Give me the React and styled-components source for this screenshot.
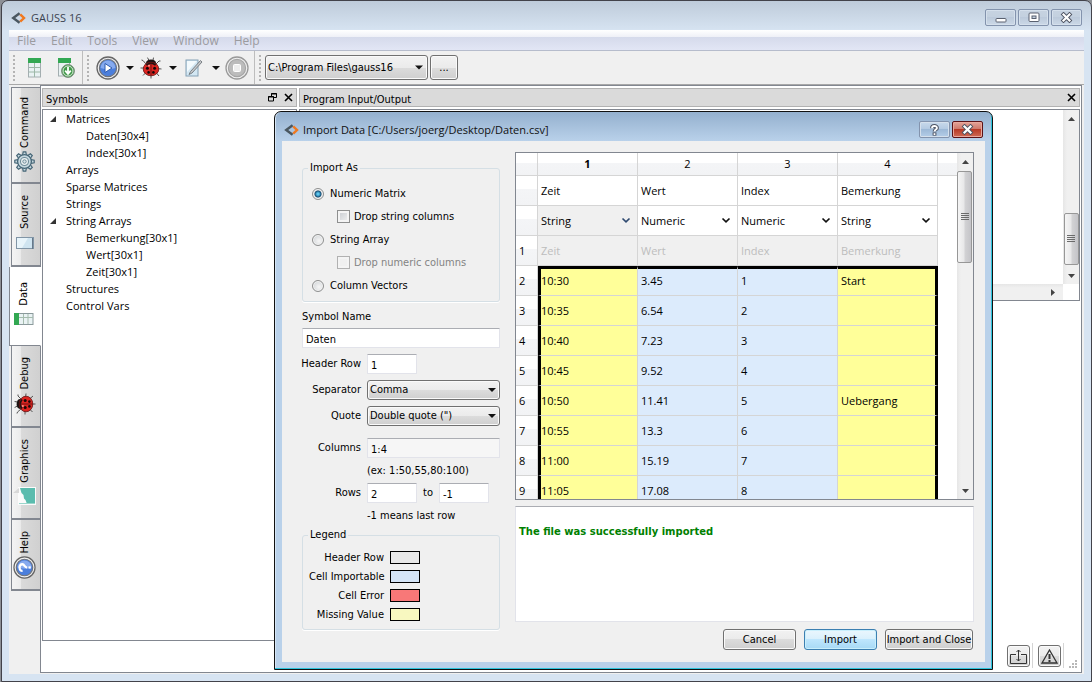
import React from "react";
import styled, { createGlobalStyle, css } from "styled-components";

const ui = '"DejaVu Sans Condensed", "DejaVu Sans", sans-serif';
const segoe = '"Open Sans", "Noto Sans", sans-serif';
const line = "#828790";

const Global = createGlobalStyle`
  *, *::before, *::after { box-sizing: border-box; }
  html, body { margin: 0; background: #8d9096; }
  body { font: 11px/14px ${ui}; color: #000; }
  button, input, select { font: inherit; color: inherit; margin: 0; }
  svg { display: block; flex: none; }
`;

/* ---------- main window ---------- */
const Desktop = styled.div`
  position: relative;
  min-height: 100vh;
  display: flex;
  padding-left: 1px;
`;
const Window = styled.div`
  flex: 1;
  display: flex;
  flex-direction: column;
  border: 1px solid #42424a;
  border-radius: 7px 7px 0 0;
  padding: 0 7px 7px;
  background: linear-gradient(#becbda, #d7e4f2 30px, #d7e4f2);
`;
const TitleBar = styled.header`
  height: 29px;
  display: flex;
  align-items: center;
  gap: 5px;
  padding: 4px 0 0 2px;
  font-family: ${segoe};
  color: #3b4350;
`;
const TitleText = styled.h1`
  margin: 0;
  flex: 1;
  font: inherit;
`;
const CaptionButtons = styled.div`
  display: flex;
  gap: 2px;
  padding-right: 2px;
`;
const CaptionButton = styled.button`
  width: 31px;
  height: 17px;
  padding: 0;
  display: grid;
  place-items: center;
  border: 1px solid ${(p) => (p.$danger ? "#5b1216" : "#8393ad")};
  border-radius: 2px;
  box-shadow: inset 0 0 0 1px ${(p) => (p.$danger ? "#e9a89d" : "#d5e0ec")};
  background: ${(p) =>
    p.$danger
      ? "linear-gradient(#e3a499, #d07a6c 45%, #b83a26 50%, #cf6b55)"
      : p.$active
      ? "linear-gradient(#c8d9eb, #b4cae2 45%, #9db9d7 50%, #b4cde8)"
      : "linear-gradient(#c7d3e1, #c3d0df 50%, #bccadb 50%, #cbd8e7)"};
`;
const MenuBar = styled.nav`
  height: 21px;
  display: flex;
  gap: 15px;
  padding: 2px 8px 0;
  border-bottom: 1px solid #b6bccc;
  background: linear-gradient(#fff, #eef0f7 7px, #d5daeb 7px, #e2e6f5);
  font-family: ${segoe};
`;
const MenuItem = styled.button`
  padding: 0;
  border: 0;
  background: none;
  color: #9b9b9f;
  font-size: 12px;
  line-height: 16px;
`;
const ToolBar = styled.div`
  height: 34px;
  display: flex;
  align-items: center;
  border-bottom: 1px solid #a8a8a8;
  background: #f0f0f0;
`;
const ToolGroup = styled.div`
  height: 100%;
  display: flex;
  align-items: center;
  gap: ${(p) => p.$gap}px;
  padding: 0 ${(p) => p.$end}px 0 4px;
  border-right: ${(p) => (p.$last ? 0 : 1)}px solid #bdbdbd;
`;
const Grip = styled.span`
  width: 2px;
  height: 26px;
  margin-right: ${(p) => p.$after}px;
  background: repeating-linear-gradient(#b4b4b4 0 2px, transparent 2px 4px);
`;
const ToolButton = styled.button`
  width: ${(p) => p.$w || 24}px;
  height: 26px;
  padding: 0;
  display: grid;
  place-items: center;
  border: 0;
  background: none;
`;

const SelectBox = styled.span`
  position: relative;
  display: block;
  width: ${(p) => (p.$w ? p.$w + "px" : "100%")};
  height: ${(p) => p.$h || 20}px;
  svg {
    position: absolute;
    right: ${(p) => p.$inset || 4}px;
    top: 0;
    height: 100%;
    pointer-events: none;
  }
`;
const NativeSelect = styled.select`
  appearance: none;
  width: 100%;
  height: 100%;
  padding: 0 16px 0 2px;
  border: 1px solid #707070;
  border-radius: 3px;
  box-shadow: inset 0 0 0 1px #fafafa;
  background: linear-gradient(#f2f2f2, #ebebeb 50%, #dcdcdc 50%, #cfcfcf);
`;
const PushButton = styled.button`
  width: ${(p) => p.$w}px;
  height: ${(p) => p.$h || 21}px;
  padding: 0;
  white-space: nowrap;
  border: 1px solid ${(p) => (p.$primary ? "#3c7fb1" : "#707070")};
  border-radius: 3px;
  box-shadow: inset 0 0 0 1px ${(p) => (p.$primary ? "#c9effc" : "#fafafa")};
  background: ${(p) =>
    p.$primary
      ? "linear-gradient(#eaf6fd, #d9f0fc 50%, #bee6fd 50%, #a7d9f5)"
      : "linear-gradient(#f2f2f2, #ebebeb 50%, #dcdcdc 50%, #cfcfcf)"};
`;

/* ---------- body of the main window ---------- */
const Body = styled.div`
  flex: 1;
  display: flex;
  background: #f0f0f0;
`;
const TabStrip = styled.div`
  width: 32px;
  display: flex;
  flex-direction: column;
  align-items: flex-end;
  padding-top: 2px;
  margin-right: -1px;
  z-index: 1;
`;
const SideTab = styled.button`
  width: ${(p) => (p.$active ? 32 : 30)}px;
  height: ${(p) => p.$h}px;
  display: flex;
  flex-direction: column;
  align-items: center;
  justify-content: center;
  gap: 3px;
  padding: 0 3px 0 0;
  border: 1px solid ${line};
  border-bottom-width: ${(p) => (p.$active ? 1 : 2)}px;
  border-top-width: ${(p) => (p.$first ? 1 : 0)}px;
  ${(p) =>
    p.$active
      ? css`
          border-right-color: #fff;
          background: #fff;
        `
      : css`
          background: linear-gradient(90deg, #f4f4f4, #ececec 30%, #dadada 34%, #d0d0d0);
        `}
`;
const TabText = styled.span`
  writing-mode: vertical-rl;
  transform: rotate(180deg);
  line-height: 14px;
`;
const TabIcon = styled.span`
  height: 22px;
  display: grid;
  place-items: center;
`;
const Pane = styled.main`
  flex: 1;
  min-width: 0;
  display: flex;
  gap: 1px;
  margin-right: 2px;
  margin-bottom: 1px;
  border: 1px solid ${line};
  background: #fff;
`;
const Dock = styled.section`
  display: flex;
  flex-direction: column;
  ${(p) => (p.$w ? `width: ${p.$w}px;` : "flex: 1; min-width: 0; padding-right: 1px;")}
  padding-top: 2px;
  padding-left: 1px;
`;
const DockTitle = styled.h2`
  height: 19px;
  display: flex;
  align-items: center;
  gap: 7px;
  margin: 0 0 2px;
  padding: 0 3px;
  border: 1px solid #b2b2b2;
  background: #dadada;
  font: inherit;
`;
const DockName = styled.span`
  flex: 1;
  padding-top: 4px;
`;
const IconButton = styled.button`
  padding: 0;
  border: 0;
  background: none;
`;
const Tree = styled.ul`
  flex: 1;
  margin: 0 0 31px;
  padding: 0 0 0 7px;
  list-style: none;
  border: 1px solid ${line};
  font: 11px/17px ${segoe};
`;
const TreeItem = styled.li`
  height: 17px;
  display: flex;
  align-items: center;
  padding-left: ${(p) => p.$depth * 20}px;
`;
const Twisty = styled.span`
  width: 16px;
`;
const Output = styled.div`
  height: 192px;
  display: grid;
  grid-template: 1fr 16px / 1fr 16px;
  border: 1px solid ${line};
`;
const ScrollTrack = styled.div`
  display: flex;
  flex-direction: ${(p) => (p.$row ? "row" : "column")};
  align-items: center;
  justify-content: ${(p) => (p.$spread ? "space-between" : "flex-end")};
  padding: ${(p) => (p.$row ? "0 7px" : "5px 0")};
  background: ${(p) => (p.$row ? "linear-gradient(#e6e6e6, #f0f0f0 4px)" : "linear-gradient(90deg, #e6e6e6, #f0f0f0 4px)")};
`;
const Thumb = styled.div`
  width: 15px;
  height: ${(p) => p.$h}px;
  margin: ${(p) => p.$m};
  display: grid;
  place-items: center;
  border: 1px solid #979797;
  border-radius: 2px;
  background: linear-gradient(90deg, #f5f5f5, #e8e8e9 45%, #d2d2d4 55%, #c4c4c8);
`;
const StatusCorner = styled.div`
  margin-top: auto;
  display: flex;
  justify-content: flex-end;
  gap: 2px;
  padding: 0 3px 4px;
`;
const StatusDivider = styled.span`
  width: 1px;
  height: 25px;
  margin-right: 3px;
  background: #d5d5d5;
`;
const StatusButton = styled(PushButton)`
  width: 23px;
  height: 22px;
  margin-top: 2px;
  display: grid;
  place-items: center;
`;
const ResizeCorner = styled.span`
  align-self: flex-end;
`;

/* ---------- import dialog ---------- */
const Dialog = styled.div`
  position: absolute;
  left: 274px;
  top: 111px;
  z-index: 5;
  width: 719px;
  max-width: calc(100vw - 280px);
  padding: 0 7px 7px;
  border: 1px solid #111;
  border-radius: 7px 7px 0 0;
  box-shadow: inset -1px -1px 0 #2cc4dc, inset 1px 0 0 #d6e6f5;
  background: linear-gradient(#94b0ce, #b9d1ea 29px, #b9d1ea);
`;
const DialogTitle = styled(TitleBar)`
  color: #111;
  padding: 6px 0 0 2px;
  gap: 4px;
`;
const DialogBody = styled.form`
  display: flex;
  gap: 15px;
  padding: 11px 11px 12px 20px;
  background: #f0f0f0;
`;
const Options = styled.div`
  width: 198px;
  flex: none;
  padding-top: 9px;
`;
const Group = styled.fieldset`
  margin: 0 0 ${(p) => p.$after || 0}px;
  min-width: 0;
  padding: ${(p) => p.$pad};
  border: 1px solid #d5dfe5;
  border-radius: 3px;
  box-shadow: 0 1px 0 #fff;
  display: flex;
  flex-direction: column;
  legend {
    margin-left: -1px;
    padding: 0 2px;
  }
`;
const Choice = styled.label`
  height: 23px;
  display: flex;
  align-items: center;
  gap: ${(p) => (p.$indent ? 4 : 6)}px;
  padding-left: ${(p) => (p.$indent ? 28 : 3)}px;
  color: ${(p) => (p.$off ? "#838383" : "#000")};
`;
const Radio = styled.input`
  appearance: none;
  width: 12px;
  height: 12px;
  border: 1px solid #8e8f8f;
  border-radius: 50%;
  box-shadow: inset 0 0 0 1px #f4f4f4;
  background: radial-gradient(circle at 60% 60%, #f6f6f6, #c9cdd1);
  &:checked {
    background: radial-gradient(circle, #5cc6ee 0 1px, #16557e 3px, #10314f 3px, #dfe5ea 4px);
  }
`;
const Check = styled.input`
  appearance: none;
  width: 13px;
  height: 13px;
  border: 1px solid ${(p) => (p.disabled ? "#b1b1b1" : "#8e8f8f")};
  box-shadow: inset 0 0 0 2px #f4f4f4;
  background: ${(p) => (p.disabled ? "#f0f0f0" : "linear-gradient(135deg, #c5c9ce, #f3f3f3)")};
`;
const FieldLabel = styled.label`
  display: flex;
  white-space: nowrap;
  justify-content: ${(p) => (p.$right ? "flex-end" : "flex-start")};
`;
const TextBox = styled.input`
  width: ${(p) => (p.$w ? p.$w + "px" : "100%")};
  height: 20px;
  padding: 2px 4px 0 3px;
  border: 1px solid #e2e3ea;
  border-top-color: #abadb3;
  border-radius: 1px;
  background: ${(p) => (p.disabled ? "#f6f6f6" : "#fff")};
`;
const WideField = styled.div`
  grid-column: 1 / 3;
`;
const FormGrid = styled.div`
  display: grid;
  grid-template-columns: 59px 133px;
  column-gap: 6px;
  align-items: center;
  row-gap: 6px;
  margin: ${(p) => p.$m};
`;
const RangeRow = styled.div`
  display: flex;
  align-items: center;
  gap: 6px;
`;
const Hint = styled.div`
  grid-column: 2;
  height: ${(p) => p.$h}px;
  line-height: 14px;
`;
const LegendList = styled.dl`
  display: grid;
  grid-template-columns: 75px 30px;
  gap: 6px 6px;
  align-items: center;
  margin: 0;
  dt {
    text-align: right;
    line-height: 13px;
    white-space: nowrap;
  }
`;
const Swatch = styled.dd`
  height: 13px;
  margin: 0;
  border: 1px solid #000;
  background: ${(p) => p.$color};
`;

const Results = styled.div`
  flex: 1;
  min-width: 0;
  display: flex;
  flex-direction: column;
`;
const GridFrame = styled.div`
  height: 348px;
  display: flex;
  border: 1px solid ${line};
  overflow: hidden;
  background: #fff;
`;
const GridView = styled.div`
  flex: 1;
  min-width: 0;
  overflow: hidden;
  background: linear-gradient(#fff, #fff 10px, #f4f5f7 10px, #f2f3f5 22px, #d5d5d5 22px, #d5d5d5 23px, #fff 23px);
`;
const DataTable = styled.table`
  width: 422px;
  table-layout: fixed;
  border-collapse: separate;
  border-spacing: 0;
  font: 11px/14px ${segoe};
`;
const headFill = "linear-gradient(#fff, #fff 45%, #f4f5f7 45%, #f2f3f5)";
const ColHead = styled.th`
  width: ${(p) => (p.$corner ? 22 : 100)}px;
  height: 23px;
  padding: 0;
  border: solid #d5d5d5;
  border-width: 0 1px 1px 0;
  background: ${headFill};
  font-weight: ${(p) => (p.$bold ? 700 : 400)};
`;
const RowHead = styled.th`
  height: 30px;
  padding: 1px 0 0 3px;
  border: solid #d5d5d5;
  border-width: 0 1px 1px 0;
  background: ${headFill};
  font-weight: 400;
  text-align: left;
`;
const fills = { plain: "#fff", header: "#f0f0f0", ok: "#dcebfc", missing: "#ffff99" };
const Cell = styled.td`
  height: 30px;
  padding: ${(p) => (p.$bare ? "0" : "1px 0 0 3px")};
  border: solid #d5d5d5;
  border-width: 0 1px 1px 0;
  background: ${(p) => fills[p.$fill]};
  color: ${(p) => (p.$fill === "header" && !p.$bare ? "#bdbdbd" : "#000")};
  ${(p) => p.$top && "border-top: 3px solid #000; padding-top: 0; padding-bottom: 2px;"}
  ${(p) => p.$left && "border-left: 3px solid #000; padding-left: 0;"}
  ${(p) => p.$right && "border-right: 3px solid #000;"}
`;
const CellSelect = styled(NativeSelect)`
  padding: 0 16px 0 3px;
  border: 0;
  border-radius: 0;
  box-shadow: none;
  background: none;
`;
const Message = styled.output`
  height: 116px;
  margin-top: 6px;
  padding: 18px 3px;
  border: 1px solid #e2e3ea;
  border-top-color: #abadb3;
  background: #fff;
  color: #008000;
  font: bold 10px/14px "DejaVu Sans", sans-serif;
`;
const Actions = styled.div`
  display: flex;
  justify-content: flex-end;
  gap: 8px;
  padding: 7px 1px 0 0;
`;

/* ---------- drawings ---------- */
const Logo = () => (
  <svg width="15" height="12" viewBox="0 0 15 12" fill="none" strokeWidth="2.4">
    <path d="M8.6 1.2 2.2 6 8.6 10.8" stroke="#4a5760" />
    <path d="M9.2 2.4 13 6 9.2 9.6" stroke="#f0781e" />
  </svg>
);
const MinGlyph = () => (
  <svg width="12" height="11"><rect x="1" y="6.5" width="10" height="3.5" rx=".8" fill="#fff" stroke="#5a6170" /></svg>
);
const MaxGlyph = () => (
  <svg width="12" height="11" fill="#fff" stroke="#5a6170"><rect x="1" y="1" width="10" height="8.5" rx="1" /><rect x="4" y="4" width="4" height="2.5" fill="#c3d0df" /></svg>
);
const CloseGlyph = () => (
  <svg width="13" height="11" fill="none"><path d="M3.5 2.5 9.5 8.5M9.5 2.5 3.5 8.5" stroke="#4d5362" strokeWidth="4" strokeLinecap="square" /><path d="M3.5 2.5 9.5 8.5M9.5 2.5 3.5 8.5" stroke="#fff" strokeWidth="2.2" strokeLinecap="square" /></svg>
);
const HelpGlyph = () => (
  <svg width="11" height="12" fill="none"><g stroke="#4d5362" strokeWidth="3.8"><path d="M3 4.2C3 1.3 8 1.3 8 4 8 5.6 5.5 5.6 5.5 7.6" /><path d="M5.5 8.4V11.6" /></g><g stroke="#fff" strokeWidth="1.8"><path d="M3 4.2C3 1.3 8 1.3 8 4 8 5.6 5.5 5.6 5.5 7.6" /><path d="M5.5 9.2V11" /></g></svg>
);
const CrossIcon = () => (
  <svg width="9" height="9"><path d="M1 1 8 8M8 1 1 8" stroke="#000" strokeWidth="1.6" /></svg>
);
const FloatIcon = () => (
  <svg width="9" height="9" fill="none" stroke="#000"><path d="M3.5 3V.5h5v4H6M3 1h6" /><path d="M.5 3.5h5v4.5h-5zM0 4h6" /></svg>
);
const DownTri = () => (
  <svg width="8" height="4" viewBox="0 0 8 4"><path d="M0 0H8L4 4Z" fill="#111" /></svg>
);
const Chevron = ({ color }) => (
  <svg width="10" viewBox="0 0 10 6" fill="none"><path d="M1.5 1 5 4.4 8.5 1" stroke={color} strokeWidth="1.7" /></svg>
);
const SmallArrow = ({ d }) => (
  <svg width="7" height="7" fill="#444"><path d={d} /></svg>
);
const Gripper = () => (
  <svg width="8" height="8" stroke="#6b6b6b"><path d="M0 .5H8M0 2.5H8M0 4.5H8M0 6.5H8" /></svg>
);
const TreeArrow = () => (
  <svg width="6" height="6"><path d="M6 0V6H0Z" fill="#333" /></svg>
);
const SheetIcon = () => (
  <svg width="13" height="20">
    <rect x=".5" y="1" width="12" height="18" fill="#e9f2f3" stroke="#a3aeb0" />
    <rect y="0" width="13" height="5" fill="#32a852" />
    <path d="M1 9.5H12M1 14H12M6.5 5V19" stroke="#9db8a8" />
  </svg>
);
const SheetImportIcon = () => (
  <svg width="17" height="20">
    <rect x=".5" y="1" width="11" height="17" fill="#e9f2f3" stroke="#a3aeb0" />
    <rect y="0" width="13" height="5" fill="#32a852" />
    <circle cx="10" cy="13" r="6.4" fill="#3f9a48" stroke="#7e8a80" />
    <circle cx="10" cy="13" r="5" fill="none" stroke="#dcebdc" />
    <path d="M10 9V15M7.2 12.6 10 15.8 12.8 12.6" fill="none" stroke="#fff" strokeWidth="1.8" />
  </svg>
);
const RoundIcon = ({ size = 24, off, children }) => (
  <svg width={size} height={size} viewBox="0 0 24 24">
    <circle cx="12" cy="12" r="11" fill="#f1f1f1" stroke={off ? "#999" : "#666"} strokeWidth="1.3" />
    <circle cx="12" cy="12" r="8.6" fill={off ? "#bcbcbc" : "#4c7fdc"} stroke={off ? "#a5a5a5" : "#70747c"} strokeWidth="1.2" />
    {!off && <path d="M4.6 12a7.4 7.4 0 0 1 14.8 0q-7 2.4-14.8 0Z" fill="#86aaee" />}
    {children}
  </svg>
);
const BugIcon = ({ turn = 0 }) => (
  <svg width="22" height="22" viewBox="0 0 22 22">
    <g transform={`rotate(${turn} 11 11)`}>
      <path d="M6 7 3 3.5 1.5 3M5 11H.5M6 15.5 3 18.5M16 7l3-3 1.5 0M17 11.5l4.5.5M16 15.5l3 3.5M9 3.5 7.5 .6M13 3.5 13.5.6M11 18v3.5" stroke="#555" fill="none" />
      <ellipse cx="11" cy="6" rx="5" ry="3.4" fill="#1c1414" />
      <ellipse cx="11" cy="12" rx="7.8" ry="6.8" fill="#dc2420" stroke="#641210" strokeWidth=".8" />
      <path d="M6.4 8Q11 4.6 15.6 8" stroke="#1c1414" strokeWidth="1.6" fill="none" />
      <path d="M11 6V18.5" stroke="#5a0f0f" strokeWidth=".8" />
      <g fill="#160808"><circle cx="7.4" cy="11.2" r="1.5" /><circle cx="14.6" cy="11.2" r="1.5" /><circle cx="8.6" cy="15.4" r="1.3" /><circle cx="13.4" cy="15.4" r="1.3" /></g>
      <circle cx="9" cy="8.8" r="1" fill="#ff9a90" />
    </g>
  </svg>
);
const EditIcon = () => (
  <svg width="18" height="20">
    <rect x="1" y="2" width="12" height="16" fill="#d3e7f3" stroke="#84a0b4" />
    <path d="M2 3H12L2 14Z" fill="#f3fafd" />
    <path d="M15.5 2.5 5.5 13.5 4 16.5 7 15 17 4Z" fill="#c5c8ca" stroke="#6f767c" strokeWidth=".9" />
  </svg>
);
const GearIcon = () => (
  <svg width="21" height="21" viewBox="0 0 21 21" fill="none">
    {[0, 45, 90, 135, 180, 225, 270, 315].map((a) => (
      <path key={a} d="M8.6 4 9.2 .8h2.6L12.4 4" transform={`rotate(${a} 10.5 10.5)`} fill="#c6d8df" stroke="#456576" strokeWidth="1.2" />
    ))}
    <circle cx="10.5" cy="10.5" r="6.9" fill="#c6d8df" stroke="#456576" strokeWidth="1.3" />
    <circle cx="10.5" cy="10.5" r="4" fill="#eef3f4" stroke="#6d8b98" strokeWidth="1.1" />
    <circle cx="10.5" cy="10.5" r="1.7" fill="#dce6ea" stroke="#6d8b98" />
  </svg>
);
const PageIcon = () => (
  <svg width="18" height="12"><rect x=".5" y=".5" width="17" height="11" fill="#cfe4f0" stroke="#8195a6" /><path d="M1 1H12L6 11H1Z" fill="#e8f4fa" /><path d="M16.5 1V12" stroke="#66788a" /></svg>
);
const DataIcon = () => (
  <svg width="20" height="12"><rect x=".5" y=".5" width="18.5" height="11" fill="#eaf3f4" stroke="#8b9a9c" /><rect width="5" height="12" fill="#32a852" /><path d="M5 4.5H19M9.5 1V11M14 1V11" stroke="#a5bcae" /></svg>
);
const ChartIcon = () => (
  <svg width="23" height="18"><rect x="5" width="18" height="18" fill="#fbfbfb" /><path d="M0 6 6 1V6Z" fill="#d8d8d8" /><path d="M7 1H22V17H14L12.5 13 11 11.5 10.5 8 8.5 6Z" fill="#5bbcae" /><path d="M6 16.5H22" stroke="#9ad5cb" /></svg>
);
const QuestionIcon = () => (
  <RoundIcon size={23}>
    <g transform="rotate(-90 12 12)" fill="none" stroke="#fff" strokeWidth="2.4">
      <path d="M8.4 10C8.2 5.8 15.6 5.8 15.4 9.8 15.2 12.2 12 12 12 14.8" />
      <path d="M12 16.2v2.4" />
    </g>
  </RoundIcon>
);

/* ---------- data ---------- */
const menus = ["File", "Edit", "Tools", "View", "Window", "Help"];
const tabs = [
  { name: "Command", h: 97, icon: <GearIcon /> },
  { name: "Source", h: 83, icon: <PageIcon /> },
  { name: "Data", h: 79, icon: <DataIcon />, active: true },
  { name: "Debug", h: 82, icon: <BugIcon turn={-90} /> },
  { name: "Graphics", h: 92, icon: <ChartIcon /> },
  { name: "Help", h: 71, icon: <QuestionIcon /> },
];
const tree = [
  ["Matrices", 0, true], ["Daten[30x4]", 1], ["Index[30x1]", 1], ["Arrays", 0], ["Sparse Matrices", 0],
  ["Strings", 0], ["String Arrays", 0, true], ["Bemerkung[30x1]", 1], ["Wert[30x1]", 1], ["Zeit[30x1]", 1],
  ["Structures", 0], ["Control Vars", 0],
];
const columns = ["Zeit", "Wert", "Index", "Bemerkung"];
const types = ["String", "Numeric", "Numeric", "String"];
const rows = [
  ["10:30", "3.45", "1", "Start"], ["10:35", "6.54", "2", ""], ["10:40", "7.23", "3", ""], ["10:45", "9.52", "4", ""],
  ["10:50", "11.41", "5", "Uebergang"], ["10:55", "13.3", "6", ""], ["11:00", "15.19", "7", ""], ["11:05", "17.08", "8", ""],
];
const legend = [["Header Row", "#e8e8e8"], ["Cell Importable", "#d5e5f7"], ["Cell Error", "#f87878"], ["Missing Value", "#f8f8c0"]];

function Dropdown({ id, value, label, w }) {
  return (
    <SelectBox $w={w}>
      <NativeSelect id={id} aria-label={label} defaultValue={value}><option>{value}</option></NativeSelect>
      <DownTri />
    </SelectBox>
  );
}

function ImportTable() {
  return (
    <GridFrame>
      <GridView>
        <DataTable>
          <thead>
            <tr>
              <ColHead $corner />
              {columns.map((c, i) => <ColHead key={c} $bold={i === 0}>{i + 1}</ColHead>)}
            </tr>
          </thead>
          <tbody>
            <tr><RowHead />{columns.map((c) => <Cell key={c} $fill="plain">{c}</Cell>)}</tr>
            <tr>
              <RowHead />
              {types.map((t, i) => (
                <Cell key={i} $bare $fill={i ? "plain" : "header"}>
                  <SelectBox $h={29} $inset={6}>
                    <CellSelect aria-label={`Type of ${columns[i]}`} defaultValue={t}><option>String</option><option>Numeric</option></CellSelect>
                    <Chevron color={i ? "#111" : "#2f4a70"} />
                  </SelectBox>
                </Cell>
              ))}
            </tr>
            <tr><RowHead>1</RowHead>{columns.map((c) => <Cell key={c} $fill="header">{c}</Cell>)}</tr>
            {rows.map((r, n) => (
              <tr key={n}>
                <RowHead>{n + 2}</RowHead>
                {r.map((v, i) => (
                  <Cell key={i} $fill={i === 0 || i === 3 ? "missing" : "ok"} $top={n === 0} $left={i === 0} $right={i === 3}>{v}</Cell>
                ))}
              </tr>
            ))}
          </tbody>
        </DataTable>
      </GridView>
      <ScrollTrack $spread>
        <SmallArrow d="M3.5 2 7 6H0Z" />
        <Thumb $h={92} $m="6px 1px auto 0"><Gripper /></Thumb>
        <SmallArrow d="M0 2H7L3.5 6Z" />
      </ScrollTrack>
    </GridFrame>
  );
}

function ImportDialog() {
  return (
    <Dialog role="dialog" aria-labelledby="dlg-title">
      <DialogTitle>
        <Logo />
        <TitleText id="dlg-title">Import Data [C:/Users/joerg/Desktop/Daten.csv]</TitleText>
        <CaptionButtons>
          <CaptionButton $active aria-label="Help"><HelpGlyph /></CaptionButton>
          <CaptionButton $danger aria-label="Close"><CloseGlyph /></CaptionButton>
        </CaptionButtons>
      </DialogTitle>
      <DialogBody onSubmit={(e) => e.preventDefault()}>
        <Options>
          <Group $pad="7px 6px 4px" $after={8}>
            <legend>Import As</legend>
            <Choice><Radio type="radio" name="as" defaultChecked />Numeric Matrix</Choice>
            <Choice $indent><Check type="checkbox" />Drop string columns</Choice>
            <Choice><Radio type="radio" name="as" />String Array</Choice>
            <Choice $indent $off><Check type="checkbox" disabled />Drop numeric columns</Choice>
            <Choice><Radio type="radio" name="as" />Column Vectors</Choice>
          </Group>
          <FieldLabel htmlFor="symbol">Symbol Name</FieldLabel>
          <FormGrid $m="4px 0 0">
            <WideField><TextBox id="symbol" defaultValue="Daten" /></WideField>
            <FieldLabel $right htmlFor="header">Header Row</FieldLabel>
            <TextBox id="header" $w={50} defaultValue="1" />
            <FieldLabel $right htmlFor="sep">Separator</FieldLabel>
            <Dropdown id="sep" value="Comma" />
            <FieldLabel $right htmlFor="quote">Quote</FieldLabel>
            <Dropdown id="quote" value={'Double quote (")'} />
          </FormGrid>
          <FormGrid $m="12px 0 5px">
            <FieldLabel $right htmlFor="cols">Columns</FieldLabel>
            <TextBox id="cols" defaultValue="1:4" disabled />
            <Hint $h={13}>(ex: 1:50,55,80:100)</Hint>
            <FieldLabel $right htmlFor="from">Rows</FieldLabel>
            <RangeRow>
              <TextBox id="from" $w={50} defaultValue="2" />
              <label htmlFor="to">to</label>
              <TextBox id="to" $w={50} defaultValue="-1" />
            </RangeRow>
            <Hint $h={14}>-1 means last row</Hint>
          </FormGrid>
          <Group $pad="9px 6px 8px">
            <legend>Legend</legend>
            <LegendList>
              {legend.map(([name, color]) => (
                <React.Fragment key={name}><dt>{name}</dt><Swatch $color={color} /></React.Fragment>
              ))}
            </LegendList>
          </Group>
        </Options>
        <Results>
          <ImportTable />
          <Message>The file was successfully imported</Message>
          <Actions>
            <PushButton type="button" $w={73}>Cancel</PushButton>
            <PushButton type="submit" $w={73} $primary>Import</PushButton>
            <PushButton type="button" $w={88}>Import and Close</PushButton>
          </Actions>
        </Results>
      </DialogBody>
    </Dialog>
  );
}

export default function App() {
  return (
    <Desktop>
      <Global />
      <Window>
        <TitleBar>
          <Logo />
          <TitleText>GAUSS 16</TitleText>
          <CaptionButtons>
            <CaptionButton aria-label="Minimize"><MinGlyph /></CaptionButton>
            <CaptionButton aria-label="Maximize"><MaxGlyph /></CaptionButton>
            <CaptionButton aria-label="Close"><CloseGlyph /></CaptionButton>
          </CaptionButtons>
        </TitleBar>
        <MenuBar>{menus.map((m) => <MenuItem key={m}>{m}</MenuItem>)}</MenuBar>
        <ToolBar>
          <ToolGroup $gap={7} $end={3}>
            <Grip $after={0} />
            <ToolButton aria-label="New matrix"><SheetIcon /></ToolButton>
            <ToolButton $w={26} aria-label="Import data"><SheetImportIcon /></ToolButton>
          </ToolGroup>
          <ToolGroup $gap={5} $end={5}>
            <Grip $after={2} />
            <ToolButton aria-label="Run"><RoundIcon><path d="M9 7.5 16 12 9 16.5Z" fill="#fff" stroke="#2d5bb0" /></RoundIcon></ToolButton>
            <ToolButton $w={9} aria-label="Run options"><DownTri /></ToolButton>
            <ToolButton aria-label="Debug"><BugIcon /></ToolButton>
            <ToolButton $w={9} aria-label="Debug options"><DownTri /></ToolButton>
            <ToolButton aria-label="Edit"><EditIcon /></ToolButton>
            <ToolButton $w={9} aria-label="Edit options"><DownTri /></ToolButton>
            <ToolButton aria-label="Stop"><RoundIcon off><rect x="8.5" y="8.5" width="7" height="7" rx="1" fill="#eee" stroke="#fff" /></RoundIcon></ToolButton>
          </ToolGroup>
          <ToolGroup $gap={2} $end={0} $last>
            <Grip $after={2} />
            <SelectBox $w={163} $h={25} $inset={5}>
              <NativeSelect aria-label="Working directory" defaultValue="C:\Program Files\gauss16"><option>{"C:\\Program Files\\gauss16"}</option></NativeSelect>
              <DownTri />
            </SelectBox>
            <PushButton $w={28} $h={25}>...</PushButton>
          </ToolGroup>
        </ToolBar>
        <Body>
          <TabStrip>
            {tabs.map((t, i) => (
              <SideTab key={t.name} $h={t.h} $active={t.active} $first={i === 0}>
                <TabText>{t.name}</TabText>
                <TabIcon>{t.icon}</TabIcon>
              </SideTab>
            ))}
          </TabStrip>
          <Pane>
            <Dock $w={256}>
              <DockTitle>
                <DockName>Symbols</DockName>
                <IconButton aria-label="Float"><FloatIcon /></IconButton>
                <IconButton aria-label="Close Symbols"><CrossIcon /></IconButton>
              </DockTitle>
              <Tree>
                {tree.map(([name, depth, open]) => (
                  <TreeItem key={name} $depth={depth}><Twisty>{open && <TreeArrow />}</Twisty>{name}</TreeItem>
                ))}
              </Tree>
            </Dock>
            <Dock>
              <DockTitle>
                <DockName>Program Input/Output</DockName>
                <IconButton aria-label="Close Output"><CrossIcon /></IconButton>
              </DockTitle>
              <Output>
                <div />
                <ScrollTrack $spread>
                  <SmallArrow d="M3.5 2 7 6H0Z" />
                  <Thumb $h={52} $m="auto 0 7px"><Gripper /></Thumb>
                  <SmallArrow d="M0 2H7L3.5 6Z" />
                </ScrollTrack>
                <ScrollTrack $row><SmallArrow d="M2 0V7L6 3.5Z" /></ScrollTrack>
                <div />
              </Output>
              <StatusCorner>
                <StatusButton aria-label="Fit height">
                  <svg width="17" height="15" fill="none" stroke="#333"><path d="M6 5.5H.5V14.5H16.5V5.5H11M8.5 1V12M6.5 3 8.5 1 10.5 3M6.5 10 8.5 12 10.5 10" /></svg>
                </StatusButton>
                <StatusDivider />
                <StatusButton aria-label="Errors">
                  <svg width="17" height="15" fill="none" stroke="#333"><path d="M8.5 1 16 14H1Z" strokeWidth="1.3" /><path d="M8.5 5V10M8.5 11V13" strokeWidth="2" /></svg>
                </StatusButton>
                <StatusDivider />
                <ResizeCorner>
                  <svg width="8" height="8" fill="#b8b8b8"><path d="M6 0h2v2H6zM3 3h2v2H3zM6 3h2v2H6zM0 6h2v2H0zM3 6h2v2H3zM6 6h2v2H6z" /></svg>
                </ResizeCorner>
              </StatusCorner>
            </Dock>
          </Pane>
        </Body>
      </Window>
      <ImportDialog />
    </Desktop>
  );
}
